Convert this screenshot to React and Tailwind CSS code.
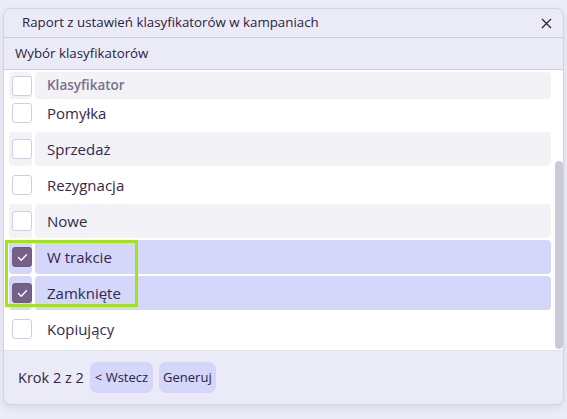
import React, { useEffect, useRef, useState } from 'react';

const ROWS = [
  { name: 'Nieodebrane' },
  { name: 'Poczta głosowa' },
  { name: 'Zajęte' },
  { name: 'Oddzwonienie' },
  { name: 'Pomyłka' },
  { name: 'Sprzedaż' },
  { name: 'Rezygnacja' },
  { name: 'Nowe' },
  { name: 'W trakcie', checked: true },
  { name: 'Zamknięte', checked: true },
  { name: 'Kopiujący' },
];

const CheckBox = ({ checked }) => (
  <span
    className={`flex h-[20px] w-[20px] items-center justify-center rounded-[3px] border ${
      checked ? 'border-[#6e5a85] bg-[#766089]' : 'border-[#cfcfe0] bg-white'
    }`}
  >
    {checked && (
      <svg width="11" height="9" viewBox="0 0 11 9" fill="none">
        <path d="M1.5 4.6 4.2 7.2 9.5 1.8" stroke="white" strokeWidth="1.4" strokeLinecap="round" strokeLinejoin="round" />
      </svg>
    )}
  </span>
);

const Row = ({ row, index }) => {
  // paski co drugi wiersz, zaznaczone na fioletowo
  const bg = row.checked ? 'bg-[#d4d6fa]' : index % 2 === 1 ? 'bg-[#f2f2f7]' : 'bg-white';
  return (
    <div className="flex h-[34px] gap-[3px]">
      <div className={`flex w-[23px] items-center justify-end rounded-[4px] ${bg}`}>
        <CheckBox checked={row.checked} />
      </div>
      <div className={`flex flex-1 items-center rounded-[4px] pl-[12px] text-[15px] text-[#35284c] ${bg}`}>
        {row.name}
      </div>
    </div>
  );
};

export default function App() {
  const listRef = useRef(null);
  const [rows] = useState(ROWS);

  useEffect(() => {
    if (listRef.current) listRef.current.scrollTop = 149;
  }, []);

  return (
    <div className="min-h-screen bg-[#ececf6] pl-[3px] pt-[8px]" style={{ fontFamily: '"Open Sans", "Noto Sans", sans-serif' }}>
      <div className="flex h-[397px] w-[561px] flex-col overflow-hidden rounded-[8px] border border-[#d3d3e4] bg-[#ebebf7] shadow-[0_3px_6px_rgba(90,90,140,0.12)]">
        <div className="flex h-[29px] items-center justify-between border-b border-[#cdcde0] pl-[18px] pr-[11px]">
          <span className="text-[13.3px] text-[#2c2140]">Raport z ustawień klasyfikatorów w kampaniach</span>
          <svg width="11" height="11" viewBox="0 0 11 11" className="mt-[1px]">
            <path d="M1 1 10 10M10 1 1 10" stroke="#2c2140" strokeWidth="1.3" />
          </svg>
        </div>
        <div className="flex h-[32px] items-center border-b border-[#cdcde0] pl-[11px] text-[13.3px] text-[#2c2140]">
          Wybór klasyfikatorów
        </div>
        <div className="relative h-[280px] bg-white">
          <div ref={listRef} className="h-full overflow-hidden pb-[4px] pl-[5px] pr-[12px]">
            <div className="sticky top-0 z-10 bg-white pb-[2px] pt-[2px]">
              <div className="flex h-[27px] gap-[3px]">
                <div className="flex w-[23px] items-center justify-end rounded-[4px] bg-[#f2f2f7]">
                  <CheckBox />
                </div>
                <div className="flex flex-1 items-center rounded-[4px] bg-[#f2f2f7] pl-[12px] text-[13.5px] font-semibold text-[#7a6f8c]">
                  Klasyfikator
                </div>
              </div>
            </div>
            <div className="flex flex-col gap-[2px]">
              {rows.map((row, i) => (
                <Row key={row.name} row={row} index={i} />
              ))}
            </div>
          </div>
          {/* pasek przewijania */}
          <div className="absolute right-0 top-[91px] h-[188px] w-[8px] rounded-full bg-[#cbcbd8]" />
        </div>
        <div className="flex flex-1 items-center gap-[6px] border-t border-[#e2e2ee] pl-[14px]">
          <span className="text-[14.5px] text-[#33264a]">Krok 2 z 2</span>
          <button className="h-[31px] rounded-[7px] bg-[#d4d6fa] px-[5px] text-[13px] text-[#2c2140]">&lt; Wstecz</button>
          <button className="h-[31px] rounded-[7px] bg-[#d4d6fa] px-[4px] text-[13px] text-[#2c2140]">Generuj</button>
        </div>
      </div>
      <div className="pointer-events-none absolute left-[5px] top-[240px] h-[67px] w-[133px] border-[3px] border-[#a3e21c]" />
    </div>
  );
}
